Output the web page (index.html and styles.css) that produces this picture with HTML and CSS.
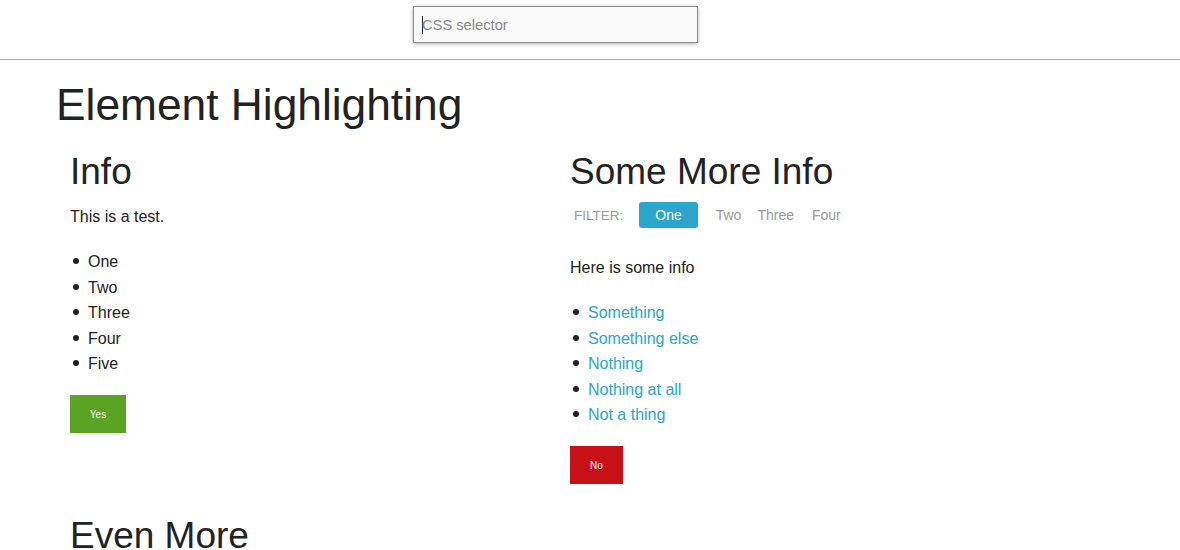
FILE: index.html
```html
<!DOCTYPE html>
<html>
<head>
<meta charset="utf-8">
<title>Element Highlighting</title>
<link rel="stylesheet" href="styles.css">
</head>
<body>
<header class="topbar">
  <div class="selector-box"><span class="caret"></span><span class="placeholder">CSS selector</span></div>
</header>
<main class="page">
  <h1 class="title">Element Highlighting</h1>
  <div class="columns">
    <section class="col">
      <h2 class="heading">Info</h2>
      <p class="text first">This is a test.</p>
      <ul class="list">
        <li>One</li>
        <li>Two</li>
        <li>Three</li>
        <li>Four</li>
        <li>Five</li>
      </ul>
      <button class="btn btn-yes">Yes</button>
    </section>
    <section class="col">
      <h2 class="heading">Some More Info</h2>
      <div class="filter">
        <span class="filter-label">FILTER:</span>
        <span class="filter-item active">One</span>
        <span class="filter-item">Two</span>
        <span class="filter-item">Three</span>
        <span class="filter-item">Four</span>
      </div>
      <p class="text">Here is some info</p>
      <ul class="list links">
        <li><a href="#">Something</a></li>
        <li><a href="#">Something else</a></li>
        <li><a href="#">Nothing</a></li>
        <li><a href="#">Nothing at all</a></li>
        <li><a href="#">Not a thing</a></li>
      </ul>
      <button class="btn btn-no">No</button>
    </section>
  </div>
  <section class="more">
    <h2 class="heading">Even More</h2>
  </section>
</main>
</body>
</html>
```
FILE: styles.css
```css
html, body {
  margin: 0;
  padding: 0;
  background: #fff;
}
body {
  font-family: "Liberation Sans", Arial, sans-serif;
  color: #222;
  font-size: 16px;
  overflow: hidden;
}
.topbar {
  box-sizing: border-box;
  height: 60px;
  border-bottom: 1px solid #a8a8a8;
  padding-top: 6px;
  padding-left: 413px;
}
.selector-box {
  width: 285px;
  height: 37px;
  box-sizing: border-box;
  border: 1px solid #8c8c8c;
  background: #f9f9f9;
  box-shadow: 0 1px 4px rgba(0, 0, 0, 0.3);
  display: flex;
  align-items: center;
  padding-left: 8px;
  padding-top: 1px;
  font-size: 14.7px;
}
.caret {
  width: 1px;
  height: 18px;
  background: #222;
  margin-right: -1px;
}
.placeholder {
  color: #8a8a8a;
}
.page {
  padding: 0 56px;
}
.title {
  margin: 18px 0 0;
  font-size: 44.3px;
  line-height: 53px;
  font-weight: normal;
  color: #222;
}
.columns {
  display: grid;
  grid-template-columns: 500px 500px;
  margin-left: 14px;
  margin-top: 19px;
}
.heading {
  margin: 0;
  font-size: 37px;
  line-height: 43px;
  font-weight: normal;
  color: #222;
}
.text {
  margin: 0;
  line-height: 25.6px;
}
.text.first {
  margin-top: 11px;
}
.list {
  list-style: none;
  margin: 19.5px 0 0;
  padding-left: 18px;
  line-height: 25.6px;
}
.list li::before {
  content: "";
  display: inline-block;
  width: 6px;
  height: 6px;
  border-radius: 50%;
  background: #222;
  margin-left: -15.5px;
  margin-right: 9.5px;
  vertical-align: 3px;
}
.links a {
  color: #2aa6cc;
  text-decoration: none;
}
.btn {
  margin-top: 18px;
  height: 38px;
  border: none;
  color: #fff;
  font-family: "Liberation Sans", Arial, sans-serif;
  font-size: 10px;
  display: block;
  padding: 0;
}
.btn-yes {
  background: #5ba423;
  width: 56px;
}
.btn-no {
  background: #c81117;
  width: 53px;
}
.filter {
  display: flex;
  align-items: center;
  height: 26px;
  margin-top: 9px;
  margin-bottom: 27px;
  font-size: 14px;
  color: #999;
}
.filter-label {
  padding-left: 4px;
  margin-right: 16px;
  font-size: 13.5px;
}
.filter-item {
  padding: 0 8px;
}
.filter-item:last-child {
  margin-left: 2px;
}
.filter-item.active {
  background: #2aa6cc;
  color: #fff;
  border-radius: 3px;
  height: 26px;
  line-height: 26px;
  padding: 0 16px;
  margin-right: 10px;
}
.more {
  margin-top: 30px;
  padding-left: 14px;
}
```
